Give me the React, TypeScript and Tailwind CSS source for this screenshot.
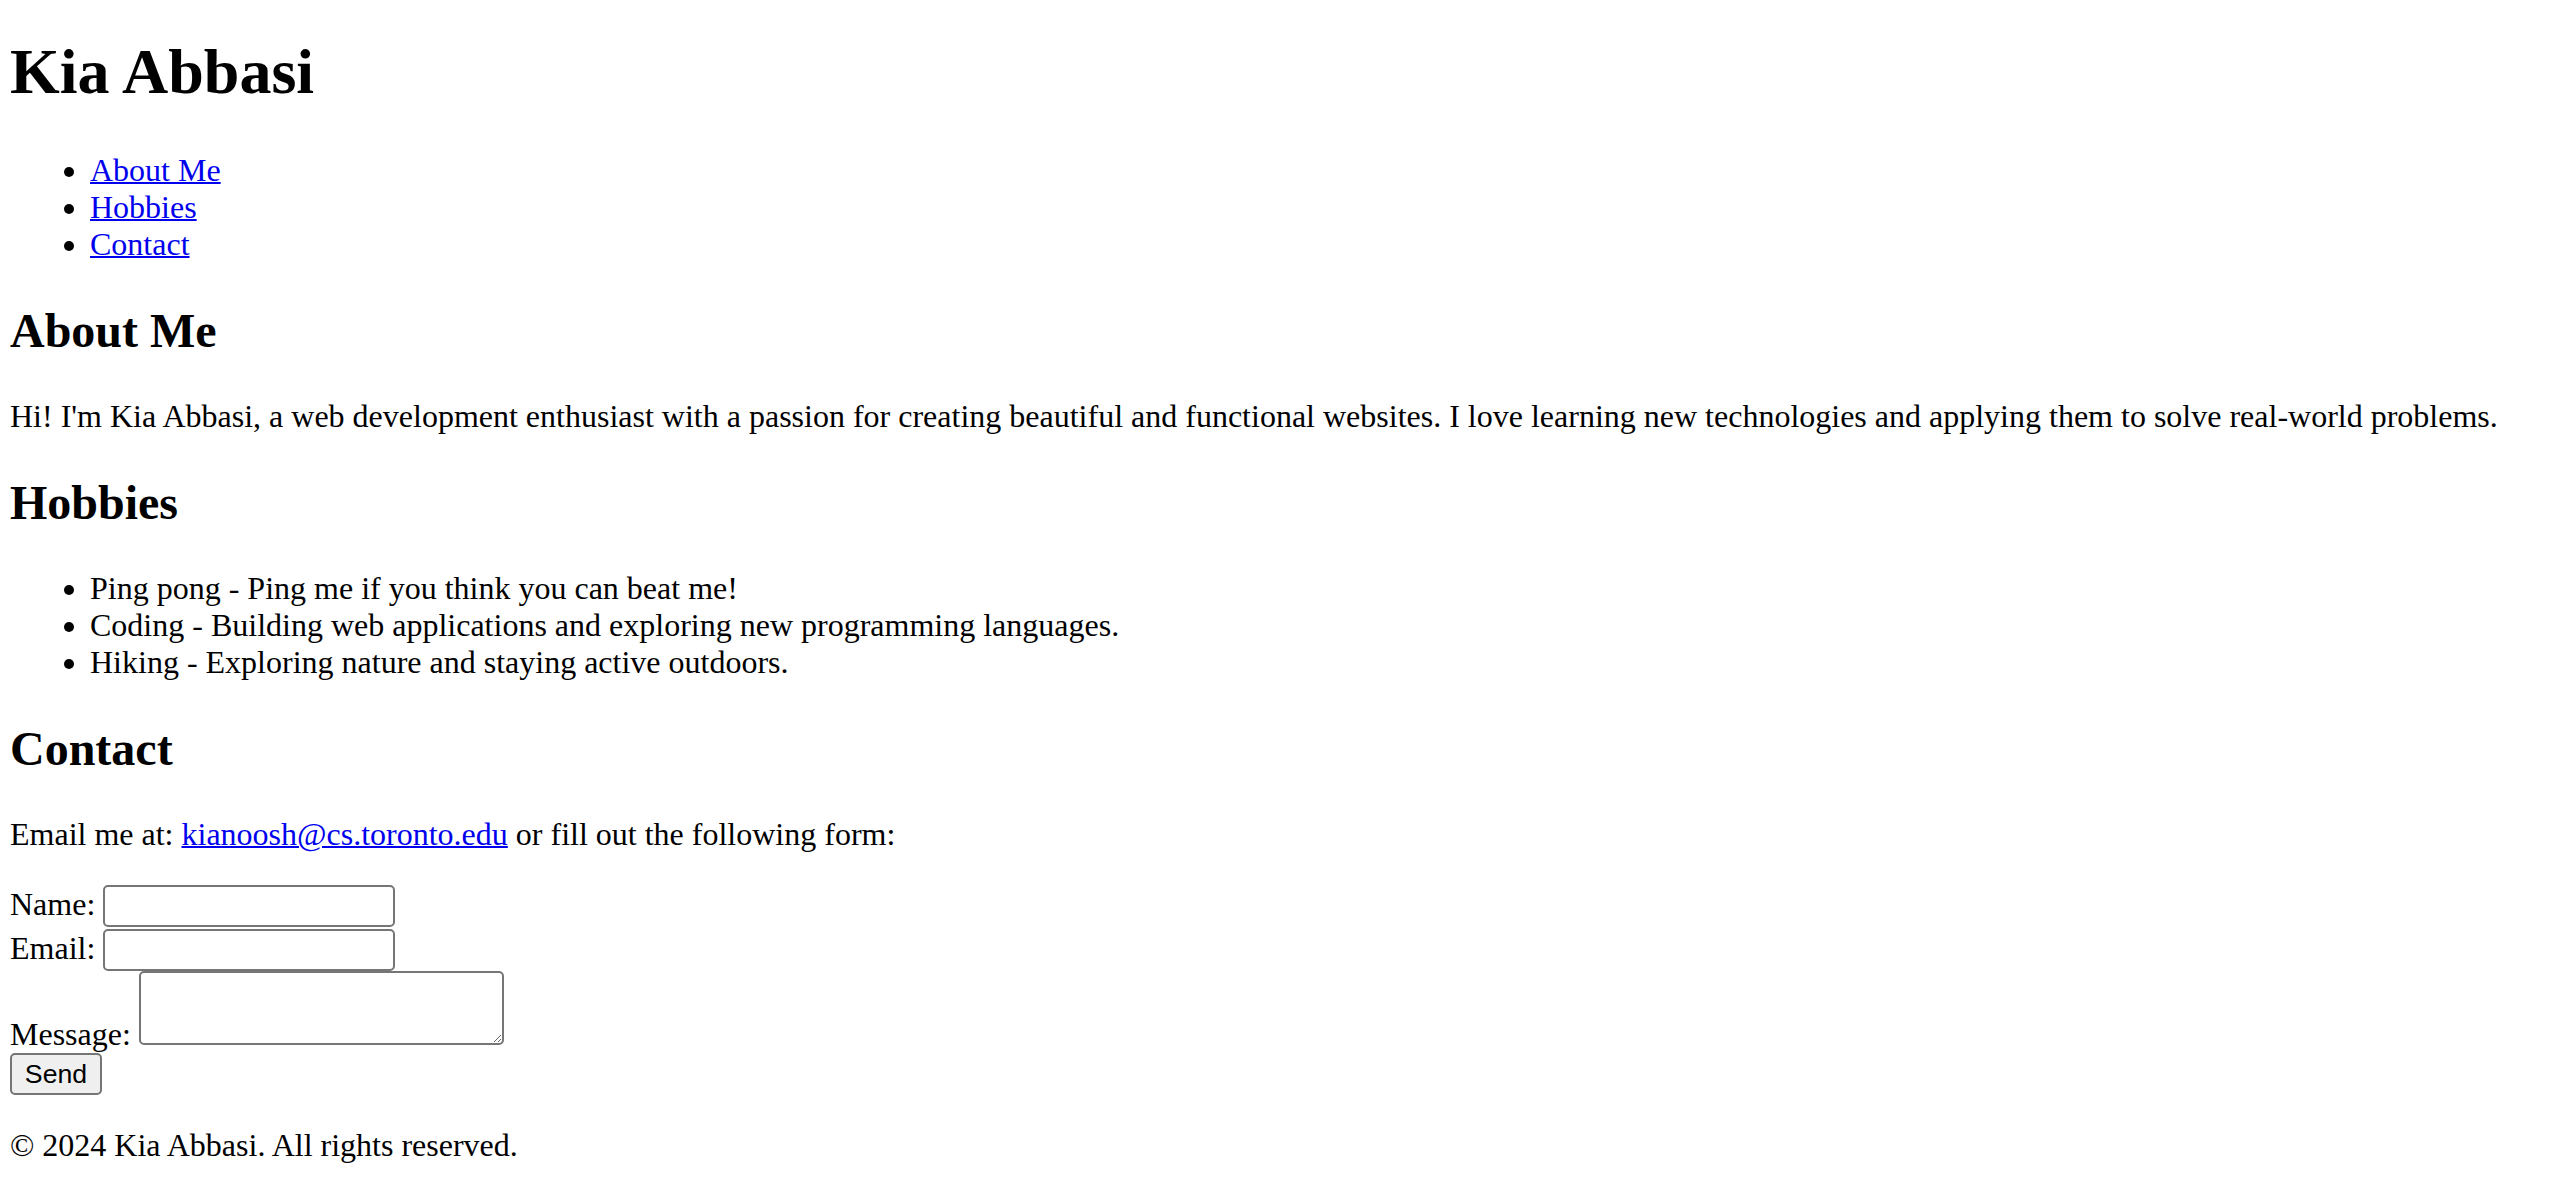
import React from "react";

export default function App() {
  return (
    <div className="bg-white text-black px-[10px] font-['Liberation_Serif','Times_New_Roman',serif] text-[32px] leading-[normal]">
      <header>
        <h1 className="text-[64px] font-bold mt-[35px] mb-[43px]">Kia Abbasi</h1>
        <nav>
          <ul className="list-disc pl-[80px] my-[32px]">
            <li>
              <a href="#about" className="text-[#0000ee] underline decoration-2">About Me</a>
            </li>
            <li>
              <a href="#hobbies" className="text-[#0000ee] underline decoration-2">Hobbies</a>
            </li>
            <li>
              <a href="#contact" className="text-[#0000ee] underline decoration-2">Contact</a>
            </li>
          </ul>
        </nav>
      </header>

      <section id="about">
        <h2 className="text-[48px] font-bold my-[40px]">About Me</h2>
        <p className="my-[32px]">
          Hi! I'm Kia Abbasi, a web development enthusiast with a passion for creating beautiful and functional websites. I love learning new technologies and applying them to solve real-world problems.
        </p>
      </section>

      <section id="hobbies">
        <h2 className="text-[48px] font-bold my-[40px]">Hobbies</h2>
        <ul className="list-disc pl-[80px] my-[32px]">
          <li>Ping pong - Ping me if you think you can beat me!</li>
          <li>Coding - Building web applications and exploring new programming languages.</li>
          <li>Hiking - Exploring nature and staying active outdoors.</li>
        </ul>
      </section>

      <section id="contact">
        <h2 className="text-[48px] font-bold my-[40px]">Contact</h2>
        <p className="my-[32px]">
          Email me at:{" "}
          <a href="mailto:kianoosh@cs.toronto.edu" className="text-[#0000ee] underline decoration-2">
            kianoosh@cs.toronto.edu
          </a>{" "}
          or fill out the following form:
        </p>
        <form onSubmit={(e) => e.preventDefault()}>
          <label htmlFor="name">Name:</label>{" "}
          <input
            id="name"
            type="text"
            className="inline-block align-baseline w-[292px] h-[42px] mb-[2px] border-2 border-[#767676] rounded-[5px] px-[4px] bg-white font-['Liberation_Sans',Arial,sans-serif] text-[26.67px]"
          />
          <br />
          <label htmlFor="email">Email:</label>{" "}
          <input
            id="email"
            type="email"
            className="inline-block align-baseline w-[292px] h-[42px] border-2 border-[#767676] rounded-[5px] px-[4px] bg-white font-['Liberation_Sans',Arial,sans-serif] text-[26.67px]"
          />
          <br />
          <label htmlFor="message">Message:</label>{" "}
          <textarea
            id="message"
            className="inline-block align-baseline w-[365px] h-[74px] border-2 border-[#767676] rounded-[5px] px-[4px] bg-white overflow-auto font-['Liberation_Mono',monospace] text-[26.67px]"
          ></textarea>
          <br />
          <button
            type="submit"
            className="inline-block w-[92px] h-[42px] border-2 border-[#767676] rounded-[5px] bg-[#efefef] text-black font-['Liberation_Sans',Arial,sans-serif] text-[26.67px] leading-[normal]"
          >
            Send
          </button>
        </form>
      </section>

      <footer>
        <p className="mt-[32px] mb-0">© 2024 Kia Abbasi. All rights reserved.</p>
      </footer>
    </div>
  );
}
